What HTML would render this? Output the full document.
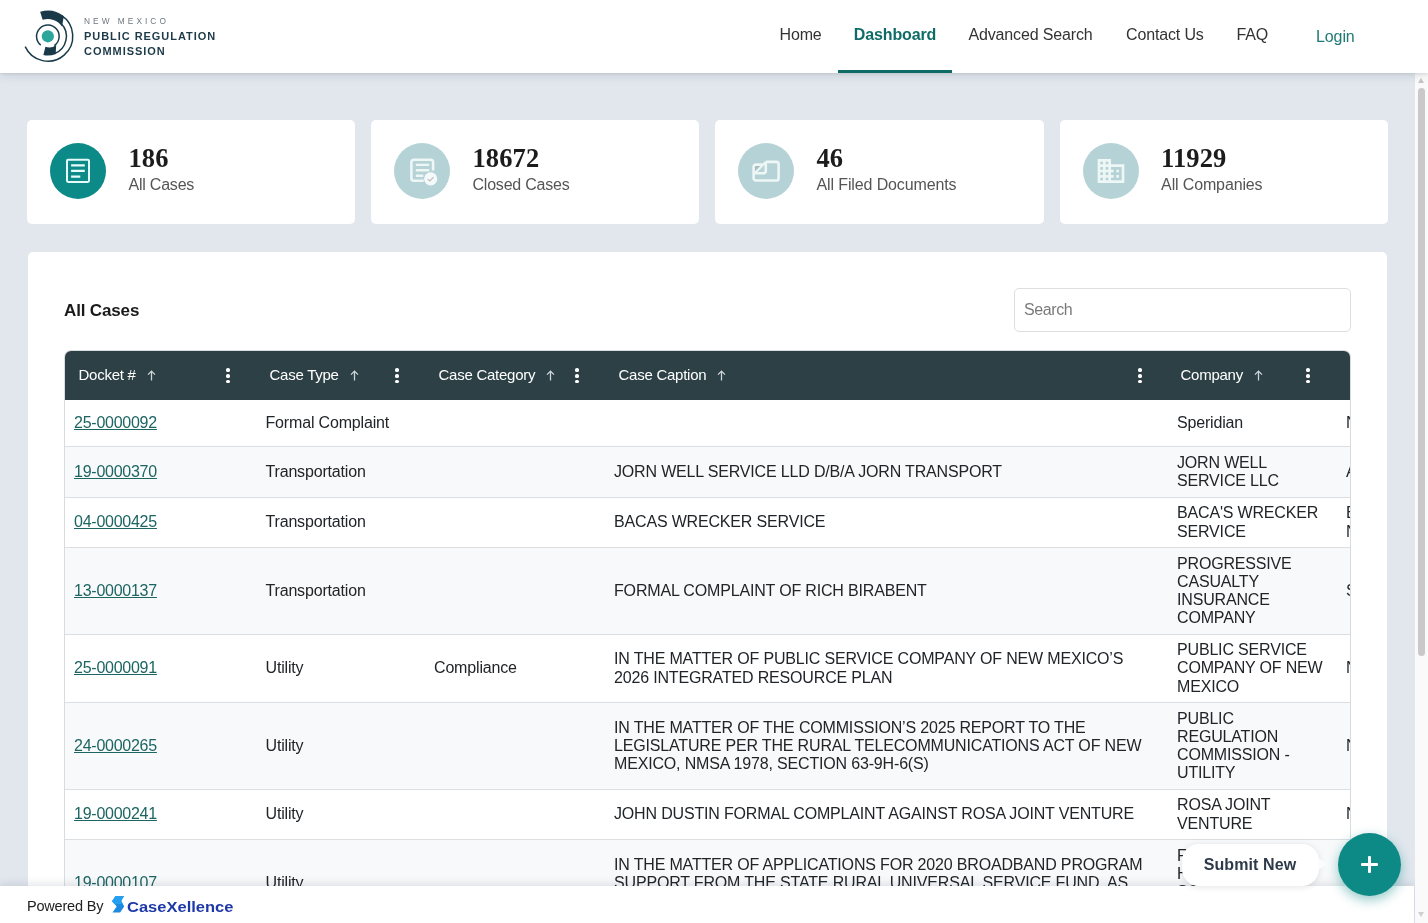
<!DOCTYPE html>
<html lang="en">
<head>
<meta charset="utf-8">
<title>NM PRC - Dashboard</title>
<style>
*{box-sizing:border-box;margin:0;padding:0}
html,body{width:1428px;height:923px;overflow:hidden}
body{font-family:"Liberation Sans",sans-serif;background:#e2e7ee;color:#212529;position:relative;font-size:16px}
a{color:inherit}
#all{position:absolute;left:0;top:0;width:1428px;height:923px;overflow:hidden;will-change:transform}

/* ---------- header ---------- */
#hdr{position:absolute;left:0;top:0;width:1428px;height:73px;background:#fff;box-shadow:0 1px 3px rgba(0,0,0,.10),0 3px 10px rgba(20,40,60,.10);z-index:30}
#logo{position:absolute;left:22px;top:8px;width:56px;height:58px}
.lt{position:absolute;left:84px;white-space:nowrap;color:#1c3a48}
#lt1{top:15.5px;font-size:8.3px;letter-spacing:3.05px;color:#6d7880;line-height:10px}
#lt2{top:28.5px;font-size:11px;font-weight:bold;letter-spacing:.95px;line-height:14px}
#lt3{top:43.5px;font-size:11px;font-weight:bold;letter-spacing:.95px;line-height:14px}
#nav{position:absolute;left:0;top:0;height:73px}
#nav div{position:absolute;top:0;padding:0 16px;height:73px;line-height:69px;font-size:16px;color:#333;white-space:nowrap;letter-spacing:-.15px}
#nav div.act{font-weight:bold;color:#0f6b66;border-bottom:3px solid #0f6b66;letter-spacing:-.12px;width:114px;padding:0;text-align:center}
#login{position:absolute;left:1316px;top:27px;font-size:16px;line-height:20px;color:#1d7a74;letter-spacing:-.1px}

/* ---------- fake scrollbar ---------- */
#sb{position:absolute;left:1414.500px;top:73px;width:13.500px;height:850px;background:#fafafa;z-index:25}
#sb .th{position:absolute;left:3.500px;top:15px;width:7px;height:568px;border-radius:4px;background:#cac8c8}
#sb .up{position:absolute;left:3.500px;top:5px;width:0;height:0;border-left:3.5px solid transparent;border-right:3.5px solid transparent;border-bottom:5px solid #c6c6c6}
#sb .dn{position:absolute;left:3.500px;top:839px;width:0;height:0;border-left:3.5px solid transparent;border-right:3.5px solid transparent;border-top:5px solid #cfcfcf}

/* ---------- stat cards ---------- */
.card{position:absolute;top:120px;height:104px;width:328px;background:#fff;border-radius:5px}
.card .ic{position:absolute;left:23px;top:23px;width:56px;height:56px;border-radius:50%;background:#b5d3d6}
.card .ic.on{background:#0c8a87}
.card .ic svg{position:absolute;left:12px;top:12px;width:32px;height:32px;fill:#fff}
.card .num{position:absolute;left:101.500px;top:21.500px;font-family:"Liberation Serif",serif;font-weight:bold;font-size:26.500px;line-height:32px;color:#1c1c1c;letter-spacing:.1px}
.card .lbl{position:absolute;left:101.500px;top:55px;font-size:16px;line-height:20px;color:#555;letter-spacing:-.22px;white-space:nowrap}

/* ---------- panel ---------- */
#panel{position:absolute;left:27.500px;top:252px;width:1359.500px;height:700px;background:#fff;border-radius:5px}
#ttl{position:absolute;left:36.500px;top:48px;font-size:17px;font-weight:bold;line-height:22px;color:#1a1a1a;letter-spacing:-.15px}
#srch{position:absolute;left:986.500px;top:36px;width:337px;height:44px;border:1px solid #dedede;border-radius:5px;background:#fff;padding-left:9px;font-size:16px;line-height:41px;color:#7a7a7a;letter-spacing:-.4px}

/* ---------- grid ---------- */
#grid{position:absolute;left:36.500px;top:98px;width:1287px;height:640px;border:1px solid #d9dcdf;border-bottom:0;border-radius:7px 7px 0 0;overflow:hidden;background:#fff}
#gh{position:absolute;left:0;top:0;width:1400px;height:50px;background:#2c4045;color:#fff;font-size:15px;letter-spacing:-.25px}
#gh .h{position:absolute;top:0;margin-left:-.500px;height:50px;line-height:47.200px;white-space:nowrap}
#gh .ar{display:inline-block;vertical-align:middle;margin-left:11px;margin-top:-2px}
#gh .kb{position:absolute;top:17.300px;width:4px;height:15px}
#gh .kb i{position:absolute;left:-.100px;width:3.700px;height:3.700px;border-radius:50%;background:#fff}
#gb{position:absolute;left:0;top:49px;width:1400px}
.r{position:relative;width:1400px;border-bottom:1px solid #dcdfe2;background:#fff}
.r.alt{background:#f8f9fa}
.c{position:absolute;top:0;height:100%;display:flex;align-items:center;font-size:16px;line-height:18.2px;color:#212529;letter-spacing:-.17px}
.c1{left:0;width:191px;padding-left:9px}
.c2{left:191px;width:169px;padding-left:9.5px}
.c3{left:360px;width:180px;padding-left:9px}
.c4{left:540px;width:562px;padding-left:9px;padding-right:8px}
.c5{left:1102px;width:170px;padding-left:10px;padding-right:6px}
.c6{left:1272px;width:120px;padding-left:9px}
.c1 a{color:#1c6562;text-decoration:underline;text-underline-offset:1px;text-decoration-thickness:1px;letter-spacing:-.25px}

/* ---------- footer ---------- */
#ftr{position:absolute;left:0;top:886px;width:1414px;height:37px;background:#fff;box-shadow:0 -2px 8px rgba(40,60,90,.14);z-index:20}
#pb{position:absolute;left:27px;top:11px;font-size:14.5px;line-height:18px;color:#222;letter-spacing:-.2px;white-space:nowrap}
#cx{position:absolute;left:127px;top:10.500px;font-size:15px;font-weight:bold;line-height:20px;color:#1d38a8;letter-spacing:0;white-space:nowrap;transform:scaleX(1.100);transform-origin:0 50%}
#cxs{position:absolute;left:111.500px;top:10.100px;width:12.500px;height:16.600px}

/* ---------- FAB ---------- */
#fab{position:absolute;left:1338px;top:833px;width:63px;height:63px;border-radius:50%;background:#0e8a86;box-shadow:0 4px 12px rgba(14,138,134,.45);z-index:40}
#fab:before{content:"";position:absolute;left:23px;top:30px;width:17px;height:3px;background:#fff;border-radius:1px}
#fab:after{content:"";position:absolute;left:30px;top:23px;width:3px;height:17px;background:#fff;border-radius:1px}
#tip{position:absolute;left:1182px;top:844px;width:136.500px;height:41.500px;border-radius:17px;background:#fff;box-shadow:0 1px 7px rgba(0,0,0,.11);z-index:40;font-size:16px;font-weight:bold;color:#2d3a4a;line-height:41px;text-align:center;letter-spacing:.1px;padding-right:.500px}
#tip:after{content:"";position:absolute;left:136px;top:14px;width:0;height:0;border-top:6.500px solid transparent;border-bottom:6.500px solid transparent;border-left:9px solid #fbfcfc}
</style>
</head>
<body>
<div id="all">

<!-- HEADER -->
<div id="hdr">
  <svg id="logo" viewBox="0 0 56 58"><circle cx="25.85" cy="28.3" r="6.1" fill="#2ca59b"/><path d="M18.74 37.08A11.3 11.3 0 1 1 32.33 37.56" fill="none" stroke="#1b3a49" stroke-width="1.5"/><path d="M38.93 15.22A18.5 18.5 0 0 1 32.18 45.68" fill="none" stroke="#1b3a49" stroke-width="1.5"/><path d="M39.41 7.42A24.9 24.9 0 1 1 3.19 38.63" fill="none" stroke="#1b3a49" stroke-width="1.5"/><path d="M18.14 3.84A25.65 25.65 0 0 1 41.82 8.23L40.02 18.38A17.3 17.3 0 0 0 20.65 11.80Z" fill="#1b3a49"/><path d="M33.68 45.89A19.25 19.25 0 0 1 21.36 47.02L23.44 38.73A11.3 11.3 0 0 0 34.19 36.93Z" fill="#1b3a49"/></svg>
  <div class="lt" id="lt1">NEW MEXICO</div>
  <div class="lt" id="lt2">PUBLIC REGULATION</div>
  <div class="lt" id="lt3">COMMISSION</div>
  <div id="nav">
    <div style="left:763.500px">Home</div><div class="act" style="left:838px">Dashboard</div><div style="left:952.500px">Advanced Search</div><div style="left:1110px">Contact Us</div><div style="left:1220.500px">FAQ</div>
  </div>
  <div id="login">Login</div>
</div>

<!-- SCROLLBAR -->
<div id="sb"><span class="up"></span><span class="th"></span><span class="dn"></span></div>

<!-- CARDS -->
<div class="card" style="left:27px">
  <div class="ic on"><svg viewBox="0 0 56 56" style="left:0;top:0;width:56px;height:56px;fill:none"><rect x="17" y="16.800" width="22" height="22.100" rx="1.100" stroke="#e6fbfb" stroke-width="2"/><path d="M21.100 22.300H34.800M21.100 27.900H34.800M21.100 33.700H30.300" stroke="#e6fbfb" stroke-width="2.300"/></svg></div>
  <div class="num">186</div><div class="lbl">All Cases</div>
</div>
<div class="card" style="left:371px">
  <div class="ic"><svg viewBox="0 0 56 56" style="left:0;top:0;width:56px;height:56px;fill:none"><g stroke="#eef6f6" stroke-width="2.6" fill="none"><path d="M29.8 37.8H19.9a2.500 2.500 0 0 1-2.500-2.500V19.300a2.500 2.500 0 0 1 2.500-2.500h16.700a2.500 2.500 0 0 1 2.500 2.500V27.600"/><path d="M21.800 21.900H35.200M21.800 27.300H35.200M21.800 32.800H29.300" stroke-width="2.400"/></g><circle cx="36.700" cy="35.800" r="6.600" fill="#f4f9f9"/><path d="M33.500 36.100l2.300 1.900 3.700-3.800" stroke="#c3bcbc" stroke-width="1.200" fill="none"/></svg></div>
  <div class="num">18672</div><div class="lbl">Closed Cases</div>
</div>
<div class="card" style="left:715px;width:329px">
  <div class="ic"><svg viewBox="0 0 56 56" style="left:0;top:0;width:56px;height:56px;fill:none"><path d="M17 22.500H26.500L17 29.500Z" fill="#a7bcc1" stroke="none"/><g stroke="#eef6f6" stroke-width="2.600" fill="none" stroke-linejoin="round"><path d="M27.800 18.900H38.400a2.200 2.200 0 0 1 2.200 2.200V35.300a2.200 2.200 0 0 1-2.200 2.200H17.800a2.200 2.200 0 0 1-2.200-2.200V23.800a2.200 2.200 0 0 1 2.200-2.200H25"/><path d="M27.800 18.500V28a2.200 2.200 0 0 1-2.200 2.200H15.600"/><path d="M16.800 30L27.600 19.400" stroke-width="2.200"/></g></svg></div>
  <div class="num">46</div><div class="lbl" style="letter-spacing:-.120px">All Filed Documents</div>
</div>
<div class="card" style="left:1059.600px;width:328.700px">
  <div class="ic"><svg viewBox="0 0 24 24" style="fill:#eef6f6"><path d="M12 7V3H2v18h20V7H12zM6 19H4v-2h2v2zm0-4H4v-2h2v2zm0-4H4V9h2v2zm0-4H4V5h2v2zm4 12H8v-2h2v2zm0-4H8v-2h2v2zm0-4H8V9h2v2zm0-4H8V5h2v2zm10 12h-8v-2h2v-2h-2v-2h2v-2h-2V9h8v10zm-2-8h-2v2h2v-2zm0 4h-2v2h2v-2z"/></svg></div>
  <div class="num">11929</div><div class="lbl" style="letter-spacing:-.140px">All Companies</div>
</div>

<!-- PANEL -->
<div id="panel">
  <div id="ttl">All Cases</div>
  <div id="srch">Search</div>
  <div id="grid">
    <div id="gh">
      <div class="h" style="left:14px">Docket #<svg class="ar" width="9" height="11" viewBox="0 0 9 11"><path d="M4.5 10.5V1.2M1 4.6L4.5 1.1L8 4.6" fill="none" stroke="#cfd6d8" stroke-width="1.3"/></svg></div><span class="kb" style="left:161.5px"><i style="top:0"></i><i style="top:5.700px"></i><i style="top:11.400px"></i></span>
      <div class="h" style="left:205px">Case Type<svg class="ar" width="9" height="11" viewBox="0 0 9 11"><path d="M4.5 10.5V1.2M1 4.6L4.5 1.1L8 4.6" fill="none" stroke="#cfd6d8" stroke-width="1.3"/></svg></div><span class="kb" style="left:330.5px"><i style="top:0"></i><i style="top:5.700px"></i><i style="top:11.400px"></i></span>
      <div class="h" style="left:374px">Case Category<svg class="ar" width="9" height="11" viewBox="0 0 9 11"><path d="M4.5 10.5V1.2M1 4.6L4.5 1.1L8 4.6" fill="none" stroke="#cfd6d8" stroke-width="1.3"/></svg></div><span class="kb" style="left:510.5px"><i style="top:0"></i><i style="top:5.700px"></i><i style="top:11.400px"></i></span>
      <div class="h" style="left:554px">Case Caption<svg class="ar" width="9" height="11" viewBox="0 0 9 11"><path d="M4.5 10.5V1.2M1 4.6L4.5 1.1L8 4.6" fill="none" stroke="#cfd6d8" stroke-width="1.3"/></svg></div><span class="kb" style="left:1073.5px"><i style="top:0"></i><i style="top:5.700px"></i><i style="top:11.400px"></i></span>
      <div class="h" style="left:1116px">Company<svg class="ar" width="9" height="11" viewBox="0 0 9 11"><path d="M4.5 10.5V1.2M1 4.6L4.5 1.1L8 4.6" fill="none" stroke="#cfd6d8" stroke-width="1.3"/></svg></div><span class="kb" style="left:1241.5px"><i style="top:0"></i><i style="top:5.700px"></i><i style="top:11.400px"></i></span>
    </div>
    <div id="gb">
      <div class="r" style="height:47px"><div class="c c1"><a>25-0000092</a></div><div class="c c2">Formal Complaint</div><div class="c c3"></div><div class="c c4"><span></span></div><div class="c c5"><span>Speridian</span></div><div class="c c6"><span>N</span></div></div>
      <div class="r alt" style="height:51px"><div class="c c1"><a>19-0000370</a></div><div class="c c2">Transportation</div><div class="c c3"></div><div class="c c4"><span>JORN WELL SERVICE LLD D/B/A JORN TRANSPORT</span></div><div class="c c5"><span>JORN WELL<br>SERVICE LLC</span></div><div class="c c6"><span>A</span></div></div>
      <div class="r" style="height:50px"><div class="c c1"><a>04-0000425</a></div><div class="c c2">Transportation</div><div class="c c3"></div><div class="c c4"><span>BACAS WRECKER SERVICE</span></div><div class="c c5"><span>BACA'S WRECKER<br>SERVICE</span></div><div class="c c6"><span>B<br>N</span></div></div>
      <div class="r alt" style="height:87px"><div class="c c1"><a>13-0000137</a></div><div class="c c2">Transportation</div><div class="c c3"></div><div class="c c4"><span>FORMAL COMPLAINT OF RICH BIRABENT</span></div><div class="c c5"><span>PROGRESSIVE<br>CASUALTY<br>INSURANCE<br>COMPANY</span></div><div class="c c6"><span>S</span></div></div>
      <div class="r" style="height:68px"><div class="c c1"><a>25-0000091</a></div><div class="c c2">Utility</div><div class="c c3">Compliance</div><div class="c c4"><span>IN THE MATTER OF PUBLIC SERVICE COMPANY OF NEW MEXICO’S<br>2026 INTEGRATED RESOURCE PLAN</span></div><div class="c c5"><span>PUBLIC SERVICE<br>COMPANY OF NEW<br>MEXICO</span></div><div class="c c6"><span>N</span></div></div>
      <div class="r alt" style="height:87px"><div class="c c1"><a>24-0000265</a></div><div class="c c2">Utility</div><div class="c c3"></div><div class="c c4"><span>IN THE MATTER OF THE COMMISSION’S 2025 REPORT TO THE<br>LEGISLATURE PER THE RURAL TELECOMMUNICATIONS ACT OF NEW<br>MEXICO, NMSA 1978, SECTION 63-9H-6(S)</span></div><div class="c c5"><span>PUBLIC<br>REGULATION<br>COMMISSION -<br>UTILITY</span></div><div class="c c6"><span>N</span></div></div>
      <div class="r" style="height:50px"><div class="c c1"><a>19-0000241</a></div><div class="c c2">Utility</div><div class="c c3"></div><div class="c c4"><span>JOHN DUSTIN FORMAL COMPLAINT AGAINST ROSA JOINT VENTURE</span></div><div class="c c5"><span>ROSA JOINT<br>VENTURE</span></div><div class="c c6"><span>N</span></div></div>
      <div class="r alt" style="height:87px"><div class="c c1"><a>19-0000107</a></div><div class="c c2">Utility</div><div class="c c3"></div><div class="c c4"><span>IN THE MATTER OF APPLICATIONS FOR 2020 BROADBAND PROGRAM<br>SUPPORT FROM THE STATE RURAL UNIVERSAL SERVICE FUND, AS<br>AMENDED</span></div><div class="c c5"><span>FRONTIER<br>HOLDINGS<br>SOUTHWEST<br>LLC</span></div><div class="c c6"><span>N</span></div></div>
    </div>
  </div>
</div>

<!-- FOOTER -->
<div id="ftr">
  <div id="pb">Powered By</div>
  <svg id="cxs" viewBox="0 0 12.500 16.600"><path d="M3.600 0H12L9.200 5.100L12.300 10.400L8.100 16.600H0.500L4.700 10.400L0 5.300Z" fill="#1c8ae2"/><path d="M3.600 0H12L9.200 5.100L10.800 7.900H2.400L0 5.300Z" fill="#25a0f1"/></svg>
  <div id="cx">CaseXellence</div>
</div>

<!-- FAB -->
<div id="tip">Submit New</div>
<div id="fab"></div>

</div>
</body>
</html>
